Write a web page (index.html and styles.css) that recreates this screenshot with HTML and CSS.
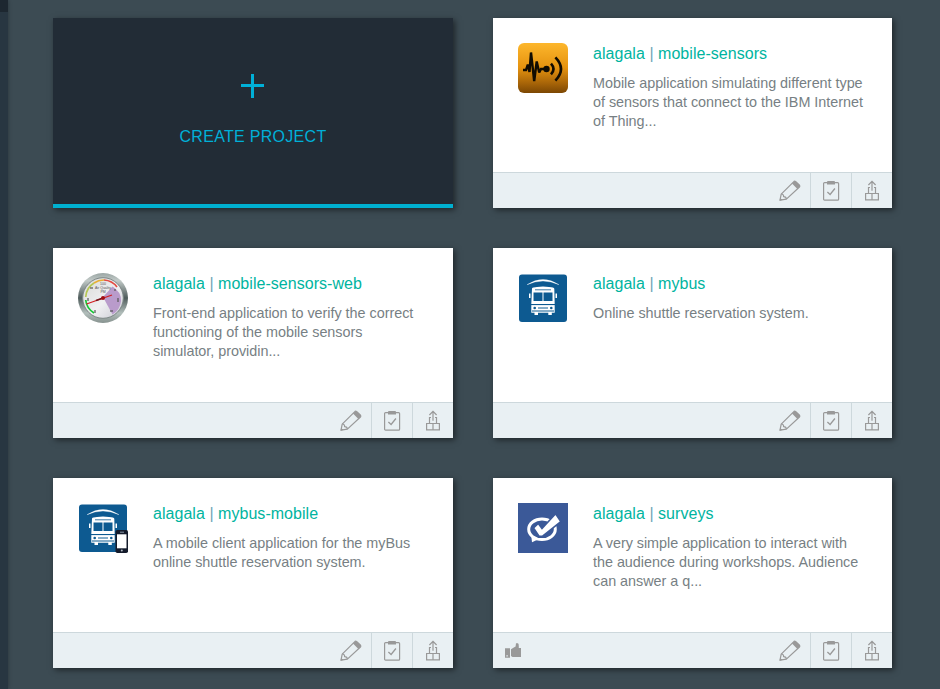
FILE: index.html
```html
<!DOCTYPE html>
<html lang="en">
<head>
<meta charset="utf-8">
<title>Projects</title>
<link rel="stylesheet" href="styles.css">
</head>
<body>
<svg class="defs" width="0" height="0" aria-hidden="true">
  <defs>
    <linearGradient id="amber" x1="0" y1="0" x2="0" y2="1"><stop offset="0" stop-color="#fdb72c"/><stop offset=".5" stop-color="#e5920f"/><stop offset=".8" stop-color="#a86508"/><stop offset="1" stop-color="#7c4703"/></linearGradient>
    <linearGradient id="rim" x1="0" y1="0" x2="0" y2="1"><stop offset="0" stop-color="#9aa5a3"/><stop offset=".15" stop-color="#c2cac8"/><stop offset=".5" stop-color="#4f5c5b"/><stop offset=".8" stop-color="#b2bebb"/><stop offset="1" stop-color="#87928f"/></linearGradient>
    <linearGradient id="face" x1="0" y1="0" x2="1" y2="1"><stop offset="0" stop-color="#d8d8d5"/><stop offset=".55" stop-color="#f0f0f2"/><stop offset="1" stop-color="#c9c9d2"/></linearGradient>
    <symbol id="pencil" viewBox="0 0 22 22"><g fill="none" stroke="#999" stroke-width="1.2" stroke-linejoin="round"><path d="M1 20.2 2.2 14.2 14.6 1.8Q15.6.6 16.8 1.8L20.2 5Q21.3 6.2 20.2 7.3L7.4 19.1Z"/><path d="M2.4 14Q4.8 14.2 4.6 16.6 7.2 16.6 7.4 19.1"/></g><path fill="#999" d="M13 3.4 14.8 1.5Q15.8.6 16.9 1.5L20.4 4.8Q21.3 6 20.3 7.2L18.4 8.9ZM.6 20.8 1.2 18 3.4 20.1Z"/></symbol>
    <symbol id="clipboard" viewBox="0 0 18 22"><rect x="1.6" y="2.6" width="15" height="17.6" rx="1" fill="none" stroke="#999" stroke-width="1.2"/><path fill="#999" d="M5 4.4V2Q5 1 6 1H12Q13 1 13 2V4.4Z"/><path d="M5.4 12 8.1 14.5 12.9 8.5" fill="none" stroke="#999" stroke-width="1.3"/></symbol>
    <symbol id="deploy" viewBox="0 0 16 22"><g fill="none" stroke="#999" stroke-width="1.2"><path d="M1.6 13.5H14.4V19.9H1.6ZM8 13.5V19.9M4.5 13.5V7.5H6M10 7.5H11.5V13.5M8 10.8V1.6M4.4 5 8 1.4 11.6 5"/></g></symbol>
    <symbol id="bus" viewBox="0 0 50 50"><rect x="1" y="1.5" width="48" height="47.5" rx="3" fill="#0d5a91"/><path d="M9 11.7Q25 1.3 41 11.7Q25 4.4 9 11.7" fill="#fff" stroke="#fff" stroke-width=".3"/><path fill="#fff" d="M14 15.5Q14.6 14 19 14 25 13.2 31 14 36 14.2 36.3 15.7L36.7 31H13.3ZM13.3 32H36.7V39.7H13.3ZM16.5 39H20V42H16.5ZM30.3 39H33.8V42H30.3ZM11 20.5H12.5V25H11ZM37.5 20.5H39V25H37.5Z"/><path d="M17 16.8H33" stroke="#0d5a91" stroke-width=".8"/><path fill="#0d5a91" d="M15.5 19.5H24.5V28H15.5ZM25.5 19.5H34.5V28H25.5Z"/><path d="M13 31.6H37M20 35H30M14 38H36" stroke="#0d5a91"/><g fill="#0d5a91"><circle cx="16.7" cy="35" r="1.3"/><circle cx="33.3" cy="35" r="1.3"/></g></symbol>
  </defs>
</svg>
<div class="sidebar"></div>
<main class="grid">
  <a class="card create">
    <svg class="plus" width="24" height="24" viewBox="0 0 24 24"><path d="M10 0H13V10H23V13H13V24H10V13H0V10H10Z" fill="#00b0d8"/></svg>
    <span class="create-label">CREATE PROJECT</span>
  </a>
  <article class="card">
    <div class="body">
      <svg class="logo" viewBox="0 0 50 50"><rect width="50" height="50" rx="6" fill="url(#amber)"/><path d="M5 27H8L9.8 21.5 11.5 29 13 9.5 16.2 38 18.7 18.5 21.2 29.5 23 26H28" fill="none" stroke="#120c02" stroke-width="2.4" stroke-miterlimit="2"/><circle cx="28.5" cy="26" r="3.2" fill="#120c02"/><path d="M33 20.6Q38 26 33 31.4M37.4 14.4Q48.6 26 37.4 37.6" fill="none" stroke="#120c02" stroke-width="2.6"/></svg>
      <div class="info"><h2>alagala <i>|</i> mobile-sensors</h2><p>Mobile application simulating different type<br>of sensors that connect to the IBM Internet<br>of Thing...</p></div>
    </div>
    <footer><span class="action"><svg class="pencil"><use href="#pencil"/></svg></span><span class="action"><svg class="clipboard"><use href="#clipboard"/></svg></span><span class="action"><svg class="deploy"><use href="#deploy"/></svg></span></footer>
  </article>
  <article class="card">
    <div class="body">
      <svg class="logo" viewBox="0 0 50 50"><circle cx="25" cy="25" r="25" fill="url(#rim)"/><circle cx="25" cy="25" r="20.3" fill="url(#face)" stroke="#7d8786"/><path d="M25 24 34.5 13.5Q43.5 19 43 28 42 37 34.5 41.5Z" fill="#b99bcb"/><g fill="none" stroke-width="1.7"><path d="M7.7 27A17.5 17.5 0 0 0 16 40" stroke="#15c934"/><path d="M7.7 24A17.5 17.5 0 0 1 16 10" stroke="#b5c652"/><path d="M16 10A17.5 17.5 0 0 1 26 7" stroke="#e9ae32"/><path d="M26 7A17.5 17.5 0 0 1 39 14" stroke="#e34a42"/></g><g class="dial"><text x="25" y="16">Air Quality</text><text x="25" y="20">PM</text><text x="25" y="11.5">100</text></g><g fill="#555"><path d="M12 14h3v2h-3zM9 25h2v3H9zM16 37h2v3h-2zM36 16h2v2h-2zM39 25h2v4h-2zM32 37h3v2h-3z" opacity=".6"/></g><path d="M8.5 31 34 22" stroke="#d21d20" stroke-width="1.3"/><path d="M18 27.5 25 25" stroke="#72151b" stroke-width="1.5"/><circle cx="25" cy="25" r="2" fill="#a30d13"/></svg>
      <div class="info"><h2>alagala <i>|</i> mobile-sensors-web</h2><p>Front-end application to verify the correct<br>functioning of the mobile sensors<br>simulator, providin...</p></div>
    </div>
    <footer><span class="action"><svg class="pencil"><use href="#pencil"/></svg></span><span class="action"><svg class="clipboard"><use href="#clipboard"/></svg></span><span class="action"><svg class="deploy"><use href="#deploy"/></svg></span></footer>
  </article>
  <article class="card">
    <div class="body">
      <svg class="logo"><use href="#bus"/></svg>
      <div class="info"><h2>alagala <i>|</i> mybus</h2><p>Online shuttle reservation system.</p></div>
    </div>
    <footer><span class="action"><svg class="pencil"><use href="#pencil"/></svg></span><span class="action"><svg class="clipboard"><use href="#clipboard"/></svg></span><span class="action"><svg class="deploy"><use href="#deploy"/></svg></span></footer>
  </article>
  <article class="card">
    <div class="body">
      <svg class="logo" viewBox="0 0 50 50"><use href="#bus"/><rect x="37.5" y="27" width="12.5" height="23" rx="1.8" fill="#141b2b"/><rect x="39" y="31.3" width="9.5" height="14" fill="#fff"/><path d="M42 29.2H46" stroke="#8995a4"/><circle cx="43.8" cy="47.6" r="1" fill="#b2bac4"/></svg>
      <div class="info"><h2>alagala <i>|</i> mybus-mobile</h2><p>A mobile client application for the myBus<br>online shuttle reservation system.</p></div>
    </div>
    <footer><span class="action"><svg class="pencil"><use href="#pencil"/></svg></span><span class="action"><svg class="clipboard"><use href="#clipboard"/></svg></span><span class="action"><svg class="deploy"><use href="#deploy"/></svg></span></footer>
  </article>
  <article class="card">
    <div class="body">
      <svg class="logo" viewBox="0 0 50 50"><path fill="#3b5998" d="M0 0H50V50H0Z"/><ellipse cx="24" cy="26.3" rx="13.3" ry="10.3" fill="none" stroke="#fff" stroke-width="3"/><path d="M13.2 32 14 39.2 21 36Z" fill="#fff"/><path d="M15.5 25 20.3 20.5 24 25.6 37.6 10.8 42.8 18.5 24.3 33.4H21.2Z" fill="#fff" stroke="#3b5998" stroke-width="1.6"/></svg>
      <div class="info"><h2>alagala <i>|</i> surveys</h2><p>A very simple application to interact with<br>the audience during workshops. Audience<br>can answer a q...</p></div>
    </div>
    <footer><svg class="thumb" viewBox="0 0 16 15"><path fill="#999" fill-rule="evenodd" d="M0 5.2H5V14.8H0ZM1.4 12.2V13.6H2.8V12.2ZM6 6.2 8 5 10.6 3.5 11 .3H13Q14 .8 13.8 5H16V14H7.5L6 13Z"/></svg><span class="action"><svg class="pencil"><use href="#pencil"/></svg></span><span class="action"><svg class="clipboard"><use href="#clipboard"/></svg></span><span class="action"><svg class="deploy"><use href="#deploy"/></svg></span></footer>
  </article>
</main>
</body>
</html>
```
FILE: styles.css
```css
* { box-sizing: border-box; }
body {
  margin: 0;
  display: flex;
  height: 689px;
  overflow: hidden;
  background: #3c4b53;
  font-family: "Liberation Sans", Arial, sans-serif;
}
.defs { position: absolute; }
.sidebar {
  flex: none;
  width: 8px;
  background: linear-gradient(#1d2730 12px, #283641 12px);
  box-shadow: 0 0 4px rgba(0, 0, 0, .3);
}
.grid {
  display: grid;
  grid-template-columns: 400px 399px;
  grid-auto-rows: 190px;
  gap: 40px;
  padding: 18px 0 0 45px;
}
.card {
  display: flex;
  flex-direction: column;
  background: #fff;
  box-shadow: 2px 2px 6px rgba(0, 0, 0, .5);
}
.create {
  align-items: center;
  padding-top: 56px;
  background: #222c36;
  border-bottom: 4px solid #00b0d0;
}
.plus { display: block; }
.create-label {
  margin-top: 29px;
  font-size: 16px;
  line-height: 20px;
  letter-spacing: .3px;
  color: #00b0d8;
}
.body {
  flex: 1;
  display: flex;
  gap: 25px;
  padding: 25px;
}
.logo { flex: none; width: 50px; height: 50px; }
.dial { font-size: 3.5px; text-anchor: middle; fill: #555; }
.info { white-space: nowrap; }
h2 {
  margin: 1px 0 0;
  font-size: 16px;
  font-weight: 400;
  line-height: 20px;
  letter-spacing: .04px;
  color: #00b4a0;
}
h2 i { font-style: normal; color: #6fa5b8; }
p {
  margin: 10px 0 0;
  font-size: 14.4px;
  line-height: 19px;
  letter-spacing: -.03px;
  color: #777f84;
}
footer {
  display: flex;
  align-items: center;
  justify-content: flex-end;
  height: 36px;
  border-top: 1px solid #cdd8dc;
  background: #e9f0f3;
}
.action {
  display: flex;
  align-items: center;
  justify-content: center;
  width: 41px;
  height: 35px;
}
.action + .action { border-left: 1px solid #cdd8dc; }
.pencil { width: 22px; height: 22px; }
.clipboard { width: 18px; height: 22px; }
.deploy { width: 16px; height: 22px; }
.thumb { width: 16px; height: 15px; margin: 0 auto 0 12px; }
```
